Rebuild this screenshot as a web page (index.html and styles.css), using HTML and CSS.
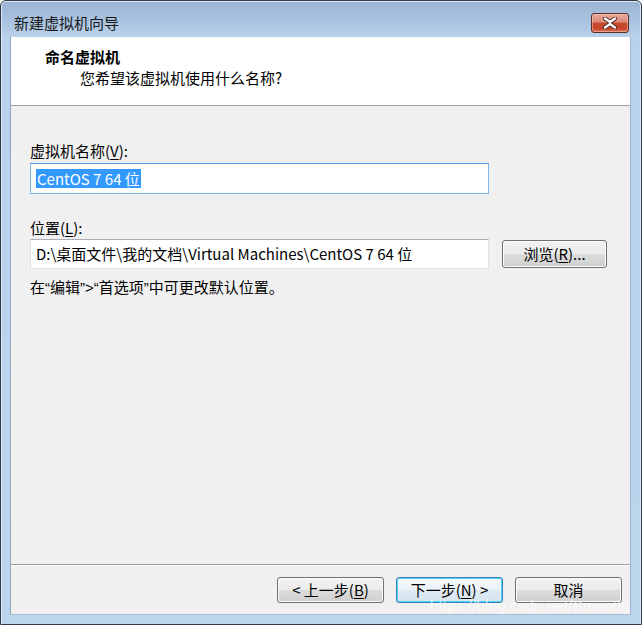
FILE: index.html
```html
<!DOCTYPE html>
<html lang="zh-CN">
<head>
<meta charset="utf-8">
<title>新建虚拟机向导</title>
<link rel="stylesheet" href="styles.css">
</head>
<body>
<div class="window">
  <div class="titlebar">
    <span class="title">新建虚拟机向导</span>
    <div class="close" aria-label="关闭">
      <svg width="20" height="12" viewBox="0 0 20 12">
        <path d="M5 1.5 L10 5 L15 1.5 M5 10.5 L10 7 L15 10.5" fill="none" stroke="#4a2a26" stroke-width="4" stroke-linecap="round" stroke-linejoin="round"/>
        <path d="M5 1.5 L10 5 L15 1.5 M5 10.5 L10 7 L15 10.5" fill="none" stroke="#ffffff" stroke-width="2.2" stroke-linecap="round" stroke-linejoin="round"/>
      </svg>
    </div>
  </div>
  <div class="client">
    <div class="header">
      <div class="h-title">命名虚拟机</div>
      <div class="h-sub">您希望该虚拟机使用什么名称?</div>
    </div>
    <div class="main">
      <div class="label">虚拟机名称(<u>V</u>):</div>
      <div class="textbox focused"><span class="sel">CentOS 7 64 位</span></div>
      <div class="label label2">位置(<u>L</u>):</div>
      <div class="row">
        <div class="textbox path">D:\桌面文件\我的文档\Virtual Machines\CentOS 7 64 位</div>
        <div class="btn browse">浏览(<u>R</u>)...</div>
      </div>
      <div class="note">在<span class="q">“</span>编辑<span class="q">”&gt;“</span>首选项<span class="q">”</span>中可更改默认位置。</div>
    </div>
    <div class="footer">
      <div class="btn">&lt; 上一步(<u>B</u>)</div>
      <div class="btn default">下一步(<u>N</u>) &gt;</div>
      <div class="btn">取消</div>
      <div class="watermark">https://blog.csdn.net/Smootht</div>
    </div>
  </div>
</div>
</body>
</html>
```

FILE: styles.css
```css
html, body {
  margin: 0;
  padding: 0;
  background: #ffffff;
}

body {
  font-family: "Noto Sans CJK SC", "Noto Sans", sans-serif;
  font-size: 15px;
  color: #000;
}

u {
  text-decoration: underline;
  text-underline-offset: 2px;
}

.window {
  width: 642px;
  height: 625px;
  box-sizing: border-box;
  border: 1px solid #2f3a48;
  border-radius: 6px 6px 0 0;
  background: linear-gradient(to bottom, #9ab4d2 0px, #a9c3e0 20px, #b9d1ea 36px, #bcd4ec 100%);
  display: flex;
  flex-direction: column;
  box-shadow: inset 0 1px 0 #dfe9f5, inset 1px 0 0 #dfe9f5, inset -1px 0 0 #dfe9f5;
}

.titlebar {
  height: 36px;
  flex: none;
  display: flex;
  align-items: center;
  justify-content: space-between;
  padding: 7px 12px 0 13px;
  box-sizing: border-box;
}

.title {
  font-size: 15px;
  line-height: 20px;
  color: #1a1a1a;
}

.close {
  width: 38px;
  height: 20px;
  box-sizing: border-box;
  border: 1px solid #5e2b25;
  border-radius: 3px;
  background: linear-gradient(to bottom, #e9a899 0%, #dc8a76 45%, #c74a30 50%, #c8442a 80%, #d7765c 100%);
  box-shadow: inset 0 0 0 1px rgba(255, 220, 210, 0.45);
  display: flex;
  align-items: center;
  justify-content: center;
}

.close svg {
  display: block;
}

.client {
  flex: 1;
  margin: 0 10px 9px 9px;
  background: #f0f0f0;
  display: flex;
  flex-direction: column;
  border-left: 1px solid #8fa6c0;
  border-right: 1px solid #9fb4cc;
  border-bottom: 1px solid #a9bdd3;
  min-height: 0;
}

.header {
  background: #ffffff;
  height: 69px;
  box-sizing: border-box;
  border-bottom: 1px solid #a0a0a0;
  padding: 10px 0 0 34px;
  flex: none;
}

.h-title {
  font-weight: bold;
  font-size: 15px;
  line-height: 20px;
}

.h-sub {
  font-size: 15px;
  line-height: 22px;
  padding-left: 35px;
}

.main {
  flex: 1;
  padding: 35px 0 0 19px;
  box-sizing: border-box;
}

.label {
  font-size: 15px;
  line-height: 20px;
  height: 20px;
}

.label2 {
  margin-top: 24px;
}

.textbox {
  width: 459px;
  height: 31px;
  box-sizing: border-box;
  background: #ffffff;
  border: 1px solid #c9d2dc;
  border-top-color: #abadb3;
  margin-top: 1px;
  padding: 3px 0 0 5px;
  font-size: 15px;
  line-height: 22px;
  white-space: nowrap;
  overflow: hidden;
}

.textbox.focused {
  margin-top: 2px;
  border: 1px solid #7eb4ea;
  border-top-color: #569de5;
  padding-top: 4px;
}

.sel {
  background: #3399ff;
  color: #ffffff;
  display: inline-block;
  line-height: 19px;
  padding: 0 1px;
}

.row {
  display: flex;
  align-items: center;
  margin-top: 1px;
}

.row .textbox {
  margin-top: 0;
  height: 30px;
  border-color: #dde3ea;
  border-top-color: #abadb3;
  padding-top: 3px;
  padding-left: 5px;
}

.btn {
  width: 107px;
  height: 26px;
  box-sizing: border-box;
  border: 1px solid #707070;
  border-radius: 3px;
  background: linear-gradient(to bottom, #f2f2f2 0%, #ebebeb 49%, #dddddd 50%, #cfcfcf 100%);
  box-shadow: inset 0 0 0 1px #fbfbfb;
  display: flex;
  align-items: center;
  justify-content: center;
  font-size: 15px;
  line-height: 20px;
  color: #000;
  flex: none;
}

.browse {
  width: 105px;
  height: 28px;
  margin-left: 13px;
}

.note {
  margin-top: 8px;
  font-size: 15px;
  line-height: 20px;
}

.note .q {
  font-family: "Liberation Sans", Arial, sans-serif;
}

.footer {
  position: relative;
  flex: none;
  height: 50px;
  box-sizing: border-box;
  border-top: 1px solid #a0a0a0;
  box-shadow: inset 0 1px 0 #ffffff;
  display: flex;
  justify-content: flex-end;
  gap: 12px;
  padding: 12px 8px 0 0;
}

.btn.default {
  border-color: #3c7fb1;
  box-shadow: inset 0 0 0 1px #48d8fb;
  background: linear-gradient(to bottom, #f4f9fc 0%, #ecf3f8 49%, #e0ebf3 50%, #d6e4ee 100%);
}

.watermark {
  position: absolute;
  right: 0;
  top: 33px;
  font-family: "Liberation Sans", Arial, sans-serif;
  font-size: 15px;
  line-height: 16px;
  color: rgba(255, 255, 255, 0.75);
  letter-spacing: 0.2px;
  pointer-events: none;
}
```
